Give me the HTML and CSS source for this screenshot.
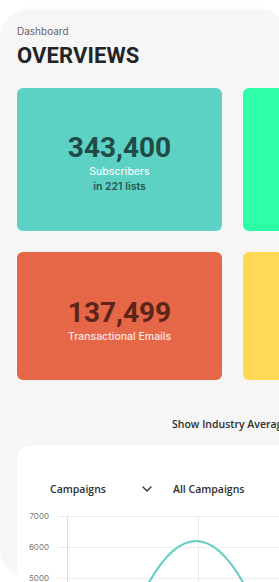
FILE: index.html
```html
<!DOCTYPE html>
<html lang="en">
<head>
<meta charset="utf-8">
<title>Dashboard</title>
<link rel="stylesheet" href="styles.css">
</head>
<body>
<main class="panel">
  <div class="crumb">Dashboard</div>
  <h1 class="title">OVERVIEWS</h1>
  <section class="stats">
    <div class="stat stat-teal">
      <div class="stat-num">343,400</div>
      <div class="stat-label">Subscribers</div>
      <div class="stat-sub">in 221 lists</div>
    </div>
    <div class="stat stat-green"></div>
    <div class="stat stat-red stat-short">
      <div class="stat-num">137,499</div>
      <div class="stat-label">Transactional Emails</div>
    </div>
    <div class="stat stat-yellow stat-short"></div>
  </section>
  <div class="industry">Show Industry Average</div>
  <section class="chart-card">
    <div class="chart-head">
      <div class="select">
        <span>Campaigns</span>
        <svg class="chev" width="10" height="6" viewBox="0 0 10 6"><path d="M1 1 L5 5 L9 1" fill="none" stroke="#333" stroke-width="1.4" stroke-linecap="round" stroke-linejoin="round"/></svg>
      </div>
      <span class="select-all">All Campaigns</span>
    </div>
    <svg class="chart" width="300" height="80" viewBox="0 0 300 80">
      <g stroke="#ececec" stroke-width="1">
        <line x1="41" y1="10.5" x2="300" y2="10.5"/>
        <line x1="41" y1="41.5" x2="300" y2="41.5"/>
        <line x1="41" y1="72.5" x2="300" y2="72.5"/>
        <line x1="181.5" y1="10" x2="181.5" y2="80"/>
      </g>
      <line x1="50.5" y1="10" x2="50.5" y2="80" stroke="#dcdcdc" stroke-width="1"/>
      <g class="ylab" font-size="8" fill="#777" text-anchor="end">
        <text x="32" y="13">7000</text>
        <text x="32" y="44">6000</text>
        <text x="32" y="75">5000</text>
      </g>
      <path d="M130 80 Q179 -10 228 80" fill="none" stroke="#5ccfc2" stroke-width="2"/>
    </svg>
  </section>
</main>
</body>
</html>
```
FILE: styles.css
```css
html, body {
  margin: 0;
  padding: 0;
  overflow: hidden;
  background: #ffffff;
}
body {
  width: 279px;
  height: 582px;
  font-family: "Inter", "Open Sans", sans-serif;
}
.panel {
  margin-top: 10px;
  width: 281px;
  height: 566px;
  box-sizing: border-box;
  padding: 15px 0 0 17px;
  background: #f6f6f6;
  border-radius: 30px 18px 0 30px;
  box-shadow: 0 0 6px rgba(0, 0, 0, 0.04);
}
.crumb {
  font-size: 10px;
  line-height: 12px;
  color: #666666;
}
.title {
  margin: 6px 0 0;
  font-family: "Roboto", sans-serif;
  font-weight: 700;
  font-size: 22px;
  line-height: 26px;
  color: #222426;
  letter-spacing: 0.1px;
}
.stats {
  margin-top: 19px;
  display: grid;
  grid-template-columns: 205px 205px;
  grid-template-rows: 143px 128px;
  column-gap: 21px;
  row-gap: 21px;
  width: 431px;
}
.stat {
  border-radius: 6px;
  display: flex;
  flex-direction: column;
  align-items: center;
  justify-content: center;
  padding-top: 6px;
  box-sizing: border-box;
}
.stat-short {
  padding-top: 8px;
}
.stat-teal { background: #5dd1c3; }
.stat-green { background: #2dffa8; }
.stat-red { background: #e66648; }
.stat-yellow { background: #ffd955; }
.stat-num {
  font-family: "Roboto", sans-serif;
  font-weight: 700;
  font-size: 28px;
  line-height: 32px;
}
.stat-teal .stat-num { color: #1f4b46; }
.stat-red .stat-num { color: #5b2518; }
.stat-label {
  font-size: 10.5px;
  line-height: 15px;
  color: #f2fbfa;
  font-weight: 500;
}
.stat-red .stat-label { color: #fbe9e4; }
.stat-sub {
  font-size: 10.5px;
  line-height: 15px;
  color: #275752;
  font-weight: 600;
}
.industry {
  margin-top: 37px;
  padding-left: 155px;
  font-family: "Open Sans", sans-serif;
  font-weight: 600;
  font-size: 10.5px;
  line-height: 14px;
  color: #2e2e2e;
  white-space: nowrap;
}
.chart-card {
  margin-top: 15px;
  width: 420px;
  height: 200px;
  background: #ffffff;
  border-radius: 12px 12px 0 0;
  padding-top: 36px;
  box-sizing: border-box;
}
.chart-head {
  display: flex;
  align-items: center;
  padding-left: 33px;
  font-family: "Open Sans", sans-serif;
  font-weight: 600;
  font-size: 10.5px;
  line-height: 14px;
  color: #2e2e2e;
}
.select {
  width: 102px;
  display: flex;
  align-items: center;
  justify-content: space-between;
  margin-right: 21px;
}
.chev {
  display: block;
}
.chart {
  display: block;
  margin-top: 10px;
}
.ylab {
  font-family: "Inter", sans-serif;
}
```
